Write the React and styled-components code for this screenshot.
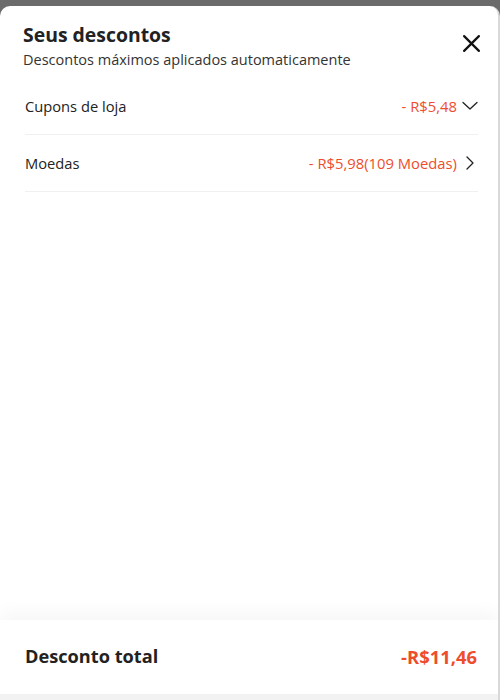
import React from "react";
import styled, { createGlobalStyle } from "styled-components";

const Global = createGlobalStyle`
  html, body { margin: 0; padding: 0; background: #6b6b6b; }
  body { font-family: "Open Sans", "Noto Sans", sans-serif; -webkit-font-smoothing: antialiased; }
  #root { height: 700px; }
`;

const RED = "#ee4d2d";

const Page = styled.div`
  height: 700px;
  display: flex;
  flex-direction: column;
  background: #6b6b6b;
`;

const Backdrop = styled.div`
  height: 6px;
  flex: none;
`;

const Sheet = styled.div`
  flex: 1;
  display: flex;
  flex-direction: column;
  background: #fff;
  border-radius: 10px 10px 0 0;
  border-right: 2px solid #d9d9d9;
  overflow: hidden;
`;

const Header = styled.div`
  display: flex;
  justify-content: space-between;
  align-items: flex-start;
  padding: 16px 16px 0 23px;
`;

const Titles = styled.div`
  display: flex;
  flex-direction: column;
`;

const Title = styled.h1`
  margin: 0;
  font-size: 19.4px;
  line-height: 26px;
  font-weight: 700;
  color: #222;
`;

const Subtitle = styled.p`
  margin: 2px 0 0;
  font-size: 14.5px;
  line-height: 20px;
  color: #333;
`;

const CloseButton = styled.button`
  border: none;
  background: none;
  padding: 0;
  margin-top: 10px;
  width: 22px;
  height: 22px;
  display: flex;
  align-items: center;
  justify-content: center;
  color: #111;
`;

const List = styled.div`
  display: flex;
  flex-direction: column;
  padding: 8px 20px 0 25px;
`;

const Row = styled.div`
  display: flex;
  align-items: center;
  justify-content: space-between;
  height: 55px;
  padding-bottom: 1px;
  border-bottom: 1px solid #f0f0f0;
`;

const Label = styled.span`
  font-size: 14.7px;
  font-weight: 500;
  color: #222;
`;

const Value = styled.span`
  display: flex;
  align-items: center;
  gap: 5px;
  font-size: 14.8px;
  font-weight: 500;
  color: ${RED};
`;

const Spacer = styled.div`
  flex: 1;
`;

const Footer = styled.div`
  height: 72px;
  display: flex;
  align-items: center;
  justify-content: space-between;
  padding: 0 21px 2px 25px;
  background: #fff;
  box-shadow: 0 -8px 16px rgba(0, 0, 0, 0.035);
`;

const TotalLabel = styled.span`
  font-size: 18.2px;
  font-weight: 700;
  color: #222;
`;

const TotalValue = styled.span`
  font-size: 18.4px;
  font-weight: 700;
  color: ${RED};
`;

const BottomStrip = styled.div`
  height: 6px;
  flex: none;
  background: #f2f2f2;
`;

const Chevron = ({ dir }) => (
  <svg width="16" height="16" viewBox="0 0 16 16" fill="none" stroke="#222" strokeWidth="1.3" strokeLinecap="round" strokeLinejoin="round">
    {dir === "down" ? <path d="M1 4.5l7 6.5 7-6.5" /> : <path d="M5 2l6 6-6 6" />}
  </svg>
);

export default function App() {
  return (
    <>
      <Global />
      <Page>
        <Backdrop />
        <Sheet>
          <Header>
            <Titles>
              <Title>Seus descontos</Title>
              <Subtitle>Descontos máximos aplicados automaticamente</Subtitle>
            </Titles>
            <CloseButton aria-label="Fechar">
              <svg width="19" height="19" viewBox="0 0 18 18" stroke="#111" strokeWidth="2.1" strokeLinecap="round">
                <path d="M2 2l14 14M16 2L2 16" />
              </svg>
            </CloseButton>
          </Header>
          <List>
            <Row>
              <Label>Cupons de loja</Label>
              <Value>- R$5,48 <Chevron dir="down" /></Value>
            </Row>
            <Row>
              <Label>Moedas</Label>
              <Value>- R$5,98(109 Moedas) <Chevron dir="right" /></Value>
            </Row>
          </List>
          <Spacer />
          <Footer>
            <TotalLabel>Desconto total</TotalLabel>
            <TotalValue>-R$11,46</TotalValue>
          </Footer>
          <BottomStrip />
        </Sheet>
      </Page>
    </>
  );
}
